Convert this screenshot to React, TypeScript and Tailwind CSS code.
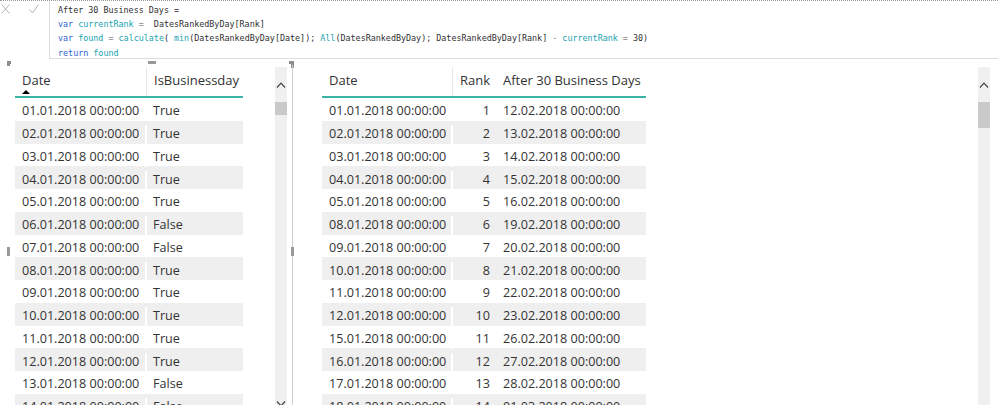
import React from "react";

const leftRows: [string, string][] = [
  ["01.01.2018 00:00:00", "True"],
  ["02.01.2018 00:00:00", "True"],
  ["03.01.2018 00:00:00", "True"],
  ["04.01.2018 00:00:00", "True"],
  ["05.01.2018 00:00:00", "True"],
  ["06.01.2018 00:00:00", "False"],
  ["07.01.2018 00:00:00", "False"],
  ["08.01.2018 00:00:00", "True"],
  ["09.01.2018 00:00:00", "True"],
  ["10.01.2018 00:00:00", "True"],
  ["11.01.2018 00:00:00", "True"],
  ["12.01.2018 00:00:00", "True"],
  ["13.01.2018 00:00:00", "False"],
  ["14.01.2018 00:00:00", "False"],
];

const rightRows: [string, string, string][] = [
  ["01.01.2018 00:00:00", "1", "12.02.2018 00:00:00"],
  ["02.01.2018 00:00:00", "2", "13.02.2018 00:00:00"],
  ["03.01.2018 00:00:00", "3", "14.02.2018 00:00:00"],
  ["04.01.2018 00:00:00", "4", "15.02.2018 00:00:00"],
  ["05.01.2018 00:00:00", "5", "16.02.2018 00:00:00"],
  ["08.01.2018 00:00:00", "6", "19.02.2018 00:00:00"],
  ["09.01.2018 00:00:00", "7", "20.02.2018 00:00:00"],
  ["10.01.2018 00:00:00", "8", "21.02.2018 00:00:00"],
  ["11.01.2018 00:00:00", "9", "22.02.2018 00:00:00"],
  ["12.01.2018 00:00:00", "10", "23.02.2018 00:00:00"],
  ["15.01.2018 00:00:00", "11", "26.02.2018 00:00:00"],
  ["16.01.2018 00:00:00", "12", "27.02.2018 00:00:00"],
  ["17.01.2018 00:00:00", "13", "28.02.2018 00:00:00"],
  ["18.01.2018 00:00:00", "14", "01.03.2018 00:00:00"],
];

const K = ({ children }: { children: React.ReactNode }) => (
  <span className="text-[#2f62d2]">{children}</span>
);
const T = ({ children }: { children: React.ReactNode }) => (
  <span className="text-[#1aa3b0]">{children}</span>
);

function Chevron({ down = false }: { down?: boolean }) {
  return (
    <svg width="10" height="6" viewBox="0 0 10 6" className={down ? "rotate-180" : ""}>
      <path d="M1 5.5 L5 1.2 L9 5.5" fill="none" stroke="#444" strokeWidth="1.2" />
    </svg>
  );
}

function Scrollbar({ thumb, showDown }: { thumb: number; showDown?: boolean }) {
  return (
    <div className="w-[12px] h-[340px] bg-[#f0f0f0] flex flex-col items-center">
      <div className="h-[35px] flex items-center justify-center pt-[1px]">
        <Chevron />
      </div>
      <div className="w-[12px] bg-[#c9c9c9]" style={{ height: thumb }} />
      <div className="flex-1" />
      {showDown && (
        <div className="h-[8px] flex items-end justify-center">
          <Chevron down />
        </div>
      )}
    </div>
  );
}

export default function App() {
  return (
    <div
      className="w-[998px] h-[405px] overflow-hidden bg-white text-[#333]"
      style={{ fontFamily: "'Open Sans', 'Noto Sans', sans-serif" }}
    >
      {/* formula bar */}
      <div className="flex h-[59px] border-t border-dotted border-[#9a9a9a]">
        <div className="w-[49px] flex items-start pt-[3px] gap-[19px] pl-[1px]">
          <svg width="9" height="10" viewBox="0 0 9 10">
            <path d="M0.5 0.5 L8.5 9.5 M8.5 0.5 L0.5 9.5" stroke="#b4b4b4" strokeWidth="1" fill="none" />
          </svg>
          <svg width="10" height="10" viewBox="0 0 10 10">
            <path d="M0.5 5.5 L3.5 9 L9.5 0.5" stroke="#b4b4b4" strokeWidth="1" fill="none" />
          </svg>
        </div>
        <div
          className="flex-1 border-l border-b border-[#dcdcdc] pl-[8px] pt-[2px] text-[8.4px] leading-[14.2px] text-[#303030] whitespace-pre"
          style={{ fontFamily: "'DejaVu Sans Mono', 'Liberation Mono', monospace" }}
        >
          <div>After 30 Business Days =</div>
          <div>
            <K>var</K> <T>currentRank</T> <span className="text-[#888]">=</span>{"  "}DatesRankedByDay[Rank]
          </div>
          <div>
            <K>var</K> <T>found</T> <span className="text-[#888]">=</span> <T>calculate</T>( <T>min</T>
            (DatesRankedByDay[Date]); <T>All</T>(DatesRankedByDay); DatesRankedByDay[Rank]{" "}
            <span className="text-[#888]">-</span> <T>currentRank</T> <span className="text-[#888]">=</span> 30)
          </div>
          <div>
            <K>return</K> <T>found</T>
          </div>
        </div>
      </div>

      {/* canvas */}
      <div className="flex">
        {/* left visual */}
        <div className="relative ml-[8px] mt-[2px] w-[285px] h-[350px]">
          {/* frame */}
          <div className="absolute left-[-1px] top-0 w-[4px] h-[5px] border-l-[3px] border-t-[3px] border-[#8c8c8c]" />
          <div className="absolute right-[-1px] top-0 w-[5px] h-[7px] border-r-[3px] border-t-[3px] border-[#8c8c8c]" />
          <div className="absolute right-0 top-[4px] bottom-0 w-[1px] bg-[#cfcfcf]" />
          <div className="absolute left-[140px] top-0 w-[8px] h-[3px] bg-[#9a9a9a]" />
          <div className="absolute left-[-1px] top-[186px] w-[3px] h-[9px] bg-[#9a9a9a]" />
          <div className="absolute right-[-1px] top-[186px] w-[3px] h-[9px] bg-[#9a9a9a]" />

          <div className="flex pl-[7px] pt-[6px]">
            <div className="w-[228px] text-[12.6px]">
              <div className="flex h-[31px] border-b-2 border-[#3cb4a6]">
                <div className="w-[132px] pl-[7px] pt-[4px] border-r border-[#e8e8e8] relative">
                  <div className="text-[13px] text-[#333]">Date</div>
                  <div className="absolute left-[7px] top-[23px] w-0 h-0 border-l-[4px] border-r-[4px] border-b-[4px] border-l-transparent border-r-transparent border-b-black" />
                </div>
                <div className="flex-1 pl-[7px] pt-[4px] text-[13px]">IsBusinessday</div>
              </div>
              {leftRows.map(([d, v], i) => (
                <div key={i} className={`flex h-[22.75px] items-center pt-[5px] ${i % 2 === 1 ? "bg-[#efefef]" : "bg-white"}`}>
                  <div className="w-[132px] pl-[7px] border-r-2 border-white">{d}</div>
                  <div className="flex-1 pl-[6px]">{v}</div>
                </div>
              ))}
            </div>
            <div className="ml-[32px]">
              <Scrollbar thumb={13} showDown />
            </div>
          </div>
        </div>

        {/* right visual */}
        <div className="flex ml-[29px] mt-[2px] pt-[6px] w-[669px]">
          <div className="w-[324px] text-[12.6px]">
            <div className="flex h-[31px] border-b-2 border-[#3cb4a6]">
              <div className="w-[131px] pl-[7px] pt-[4px] border-r border-[#e8e8e8] text-[13px]">Date</div>
              <div className="w-[42px] pt-[4px] pr-[5px] text-right text-[13px]">Rank</div>
              <div className="flex-1 pl-[8px] pt-[4px] text-[13px]">After 30 Business Days</div>
            </div>
            {rightRows.map(([d, r, a], i) => (
              <div key={i} className={`flex h-[22.75px] items-center pt-[5px] ${i % 2 === 1 ? "bg-[#efefef]" : "bg-white"}`}>
                <div className="w-[131px] pl-[7px] border-r-2 border-white">{d}</div>
                <div className="w-[42px] pr-[5px] text-right">{r}</div>
                <div className="flex-1 pl-[8px]">{a}</div>
              </div>
            ))}
          </div>
          <div className="ml-auto mr-[1px]">
            <Scrollbar thumb={26} />
          </div>
        </div>
      </div>
    </div>
  );
}
